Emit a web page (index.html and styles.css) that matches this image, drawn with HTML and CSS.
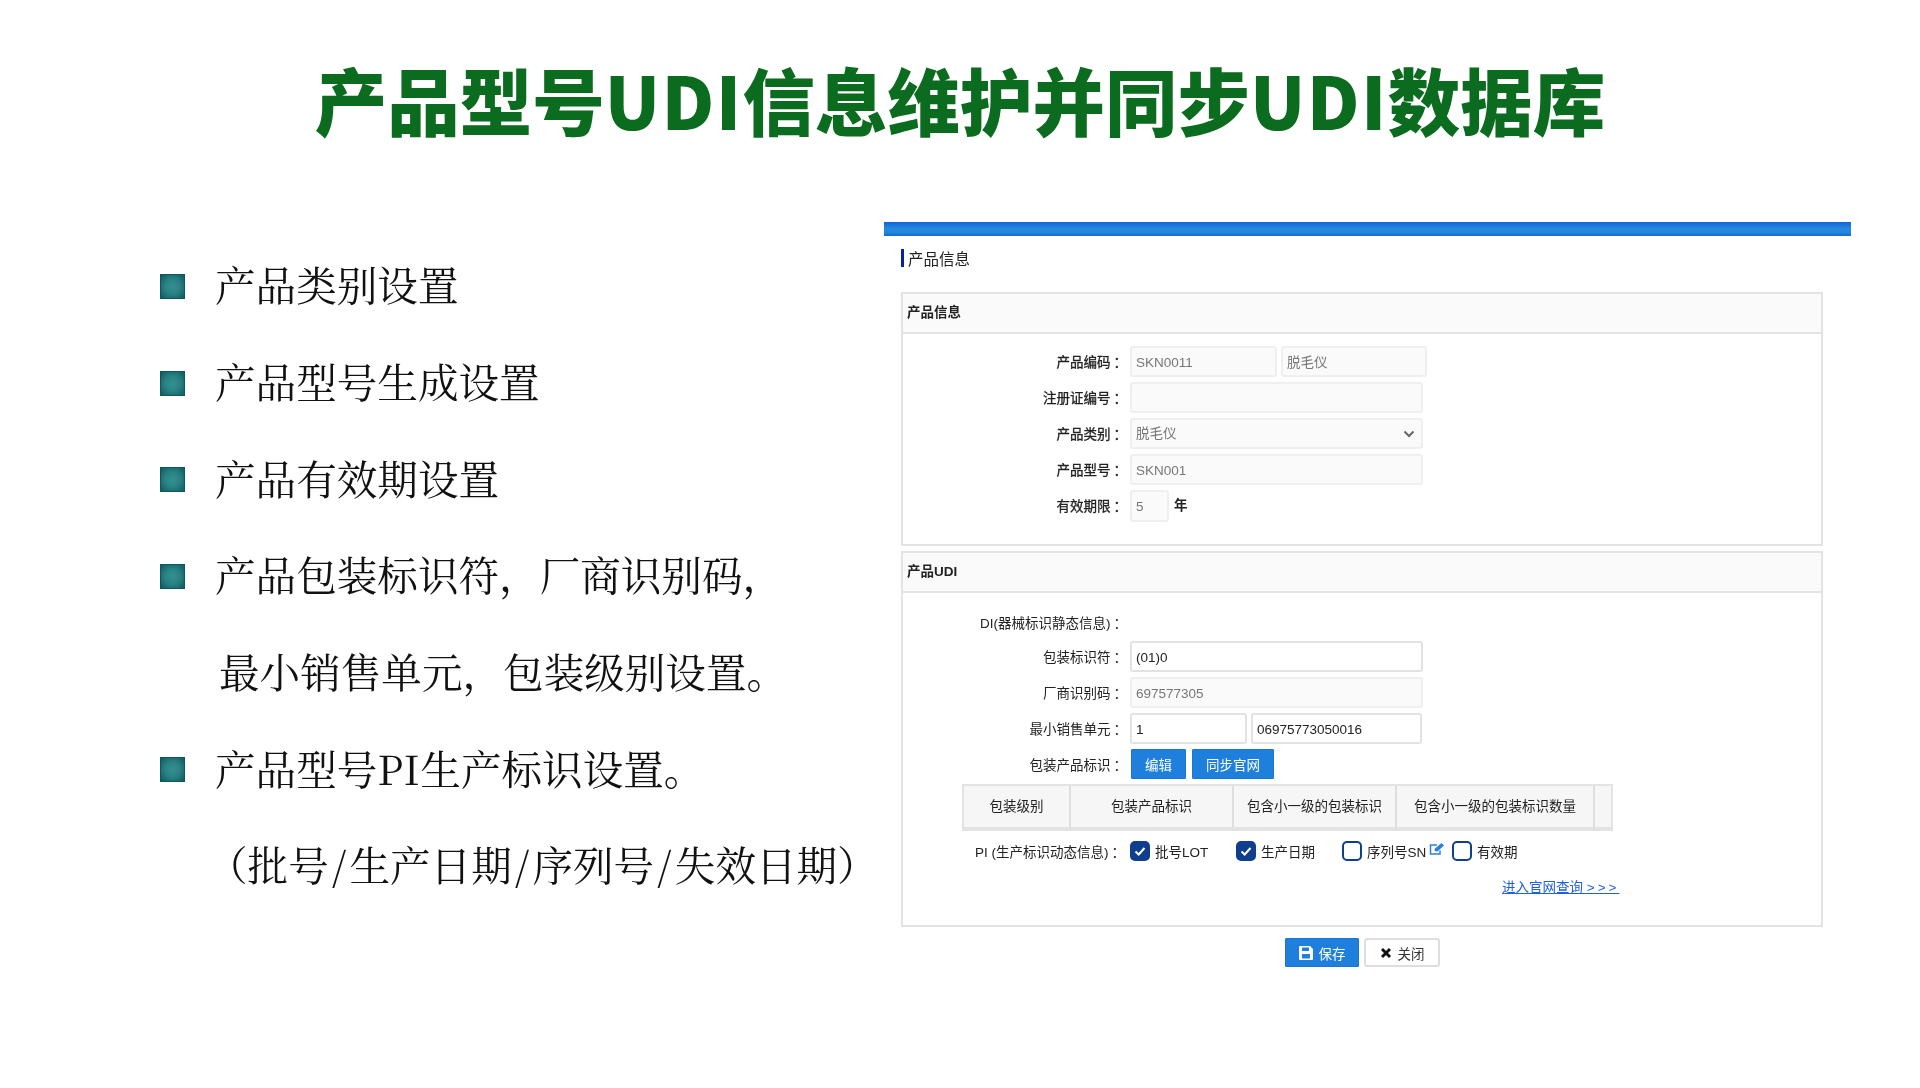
FILE: index.html
```html
<!DOCTYPE html>
<html lang="zh-CN">
<head>
<meta charset="utf-8">
<title>产品型号UDI信息维护并同步UDI数据库</title>
<link rel="stylesheet" href="styles.css">
</head>
<body>
<main class="slide">
  <h1 class="title">产品型号<span class="latin">UDI</span>信息维护并同步<span class="latin">UDI</span>数据库</h1>
  <div class="content">
    <ul class="points">
      <li class="point"><span class="bullet"></span><span>产品类别设置</span></li>
      <li class="point"><span class="bullet"></span><span>产品型号生成设置</span></li>
      <li class="point"><span class="bullet"></span><span>产品有效期设置</span></li>
      <li class="point"><span class="bullet"></span><span>产品包装标识符，厂商识别码，</span></li>
      <li class="point cont">最小销售单元，包装级别设置。</li>
      <li class="point"><span class="bullet"></span><span>产品型号<span class="half">PI</span>生产标识设置。</span></li>
      <li class="point cont2"><span>（批号<span class="sl">/</span>生产日期<span class="sl">/</span>序列号<span class="sl">/</span>失效日期）</span></li>
    </ul>
    <section class="app">
      <div class="topbar"></div>
      <div class="section-title"><span class="section-mark"></span>产品信息</div>

      <div class="panel panel-info">
        <div class="panel-head">产品信息</div>
        <div class="panel-body body-info">
          <div class="row"><div class="label">产品编码<span class="colon">：</span></div><div class="field off w147">SKN0011</div><div class="field off w146">脱毛仪</div></div>
          <div class="row"><div class="label">注册证编号<span class="colon">：</span></div><div class="field off w293"></div></div>
          <div class="row"><div class="label">产品类别<span class="colon">：</span></div><div class="field off w293 select"><span>脱毛仪</span>
            <svg class="chevron" viewBox="0 0 12 8" width="12" height="8"><path d="M1.500 1.500 6 6l4.500-4.500" fill="none" stroke="#666" stroke-width="2"/></svg></div></div>
          <div class="row"><div class="label">产品型号<span class="colon">：</span></div><div class="field off w293">SKN001</div></div>
          <div class="row row-last"><div class="label">有效期限<span class="colon">：</span></div><div class="field off w39">5</div><div class="unit">年</div></div>
        </div>
      </div>

      <div class="panel panel-udi">
        <div class="panel-head">产品UDI</div>
        <div class="panel-body body-udi">
          <div class="row row-di"><div class="label">DI(器械标识静态信息)<span class="colon">：</span></div></div>
          <div class="row"><div class="label">包装标识符<span class="colon">：</span></div><div class="field on w293">(01)0</div></div>
          <div class="row"><div class="label">厂商识别码<span class="colon">：</span></div><div class="field off w293">697577305</div></div>
          <div class="row"><div class="label">最小销售单元<span class="colon">：</span></div><div class="field on w117">1</div><div class="field on w171">06975773050016</div></div>
          <div class="row row-btn"><div class="label">包装产品标识<span class="colon">：</span></div><div class="btn blue w55">编辑</div><div class="btn blue w82">同步官网</div></div>
          <div class="table">
            <div class="th c1">包装级别</div>
            <div class="th c2">包装产品标识</div>
            <div class="th c3">包含小一级的包装标识</div>
            <div class="th c4">包含小一级的包装标识数量</div>
            <div class="th c5"></div>
          </div>
          <div class="pi">
            <div class="pi-label">PI (生产标识动态信息)<span class="colon">：</span></div>
            <div class="check w106"><span class="box checked"><svg viewBox="0 0 20 20" width="20" height="20"><path d="M5.500 10.500 8.700 13.500 14.500 7" fill="none" stroke="#fff" stroke-width="2"/></svg></span>批号LOT</div>
            <div class="check w106"><span class="box checked"><svg viewBox="0 0 20 20" width="20" height="20"><path d="M5.500 10.500 8.700 13.500 14.500 7" fill="none" stroke="#fff" stroke-width="2"/></svg></span>生产日期</div>
            <div class="check w110"><span class="box"></span>序列号SN<svg class="edit" viewBox="0 0 16 14" width="16" height="14"><path d="M11 8.500V12H1.500V3H8" fill="none" stroke="#2f7fe0" stroke-width="1.500"/><path d="M5.500 9 6 6.500 12.500 1l2.500 2.500L8.500 9.500z" fill="#2f7fe0"/></svg></div>
            <div class="check"><span class="box"></span>有效期</div>
          </div>
          <div class="link-row"><a class="link" href="#">进入官网查询 <span class="arrows">&gt;&gt;&gt;</span></a></div>
        </div>
      </div>

      <div class="actions">
        <div class="btn blue w74"><svg class="save" viewBox="0 0 14 14" width="14" height="14"><path fill-rule="evenodd" d="M1 0h10l3 3v10a1 1 0 0 1-1 1H1a1 1 0 0 1-1-1V1a1 1 0 0 1 1-1zm2 1.500V5h7V1.500zM3 8v4.500h8V8z" fill="#fff"/></svg>保存</div>
        <div class="btn plain w76"><svg class="close" viewBox="0 0 12 12" width="12" height="12"><path d="M2 2l8 8M10 2l-8 8" stroke="#111" stroke-width="3"/></svg>关闭</div>
      </div>
    </section>
  </div>
</main>
</body>
</html>
```
FILE: styles.css
```css
* { box-sizing: border-box; }
html, body { margin: 0; padding: 0; background: #fff; }
body { font-family: "Liberation Sans", "Noto Sans CJK SC", sans-serif; text-spacing-trim: space-all; }
.slide { width: 1920px; height: 1088px; overflow: hidden; background: #fff; padding-top: 63px; }
.title { margin: 0; height: 72px; line-height: 72px; text-align: center; font-size: 72.500px; font-weight: 900; color: #0b6b1e; white-space: nowrap; font-family: "Noto Sans CJK SC", sans-serif; filter: blur(0.500px); }
.latin { letter-spacing: 1.400px; }
.content { display: flex; margin-top: 87px; }
.points { list-style: none; margin: 0; padding: 16px 0 0 160px; width: 884px; font-family: "Liberation Serif", "Noto Serif CJK SC", serif; font-size: 40.600px; color: #111; filter: blur(0.400px); }
.point { display: flex; align-items: center; height: 96.700px; padding-bottom: 5px; gap: 30px; white-space: nowrap; }
.cont { padding-left: 59px; }
.cont2 { padding-left: 47px; }
.half { font-family: "Noto Serif CJK SC", serif; letter-spacing: 0.500px; }
.sl { font-family: "Noto Serif CJK SC", serif; padding: 0 3.200px; }
.bullet { width: 25px; height: 25px; flex: none; margin-top: 5px; background: radial-gradient(circle, #34908f 0%, #2a8385 45%, #0e5a60 100%); border: 1px solid #0f5660; }
.app { width: 967px; filter: blur(0.450px); }
.topbar { height: 14px; background: linear-gradient(#1462d6, #2489dc 45%, #2286da 75%, #1566d2); }
.section-title { display: flex; align-items: center; gap: 4px; height: 18px; margin: 13px 0 25px 17px; font-size: 15.500px; color: #222; }
.section-mark { width: 3px; height: 18px; background: #0b209c; }
.panel { width: 922px; margin-left: 17px; border: 2px solid #e3e3e3; background: #fff; }
.panel-info { height: 254px; margin-bottom: 5px; }
.panel-udi { height: 376px; }
.panel-head { height: 40px; padding-left: 4px; line-height: 38px; font-size: 13.500px; font-weight: 700; color: #222; background: #fafafa; border-bottom: 2px solid #e3e3e3; }
.body-info { padding-top: 12px; }
.body-udi { padding-top: 14px; }
.row { display: flex; height: 31px; gap: 4px; margin-bottom: 5px; }
.row-last { height: 32px; }
.row-di { height: 31px; margin-bottom: 3px; }
.row-btn { gap: 6px; height: 30px; margin-bottom: 5px; }
.label { width: 221px; margin-right: 2px; line-height: 34px; text-align: right; font-size: 13.500px; color: #222; white-space: nowrap; flex: none; }
.colon { margin: 0 -3px 0 3px; }
.panel-info .label { -webkit-text-stroke: 0.300px #222; }
.row-btn .label { margin-right: 1px; }
.field { height: 100%; padding: 0 4px; line-height: 29px; font-size: 13.500px; border: 2px solid #efefef; border-radius: 3px; white-space: nowrap; }
.off { background: #fafafa; color: #777; }
.on { background: #fff; color: #222; border-color: #e2e2e2; }
.w147 { width: 147px; }
.w146 { width: 146px; }
.w293 { width: 293px; }
.w39 { width: 39px; }
.w117 { width: 117px; }
.w171 { width: 171px; }
.w55 { width: 55px; }
.w82 { width: 82px; }
.w74 { width: 74px; }
.w76 { width: 76px; }
.w106 { width: 106px; }
.w110 { width: 110px; }
.select { display: flex; align-items: center; justify-content: space-between; padding-right: 6px; }
.unit { margin-left: 1px; line-height: 31px; font-size: 13.500px; font-weight: 700; color: #222; }
.btn { display: flex; align-items: center; justify-content: center; height: 30px; font-size: 13.500px; border-radius: 1px; white-space: nowrap; }
.blue { background: #1e80dc; color: #fff; border: 1px solid #1a78d4; }
.plain { background: #fff; color: #333; border: 2px solid #dedede; border-radius: 3px; }
.table { display: flex; width: 651px; height: 47px; margin-left: 59px; border: 2px solid #e3e3e3; border-bottom-width: 3px; background: #f6f6f6; }
.th { height: 42px; line-height: 41px; text-align: center; font-size: 13.500px; color: #222; border-right: 2px solid #dedede; white-space: nowrap; border-bottom: 1px solid #e3e3e3; }
.c1 { width: 107px; }
.c2 { width: 163px; }
.c3 { width: 163px; }
.c4 { width: 198px; }
.c5 { flex: 1; border-right: 0; }
.pi { display: flex; align-items: center; height: 20px; margin-top: 10px; padding-left: 72px; font-size: 13.500px; color: #222; }
.pi-label { width: 155px; white-space: nowrap; }
.check { display: flex; align-items: center; gap: 5px; white-space: nowrap; }
.box { width: 20px; height: 20px; flex: none; border: 2px solid #0f3f8c; border-radius: 5px; background: #fff; }
.box svg { display: block; margin: -2px; }
.checked { background: #0f3f8c; }
.edit { margin: -4px 0 0 -2px; flex: none; }
.link-row { display: flex; margin-top: 15px; padding-left: 599px; }
.link { font-size: 13.500px; color: #1f5fe0; text-decoration: underline; white-space: nowrap; }
.arrows { letter-spacing: 3px; }
.actions { display: flex; gap: 5px; padding-left: 401px; margin-top: 11px; }
.actions .btn { height: 29px; }
.save { margin-right: 6px; }
.close { margin-right: 6px; }
```
